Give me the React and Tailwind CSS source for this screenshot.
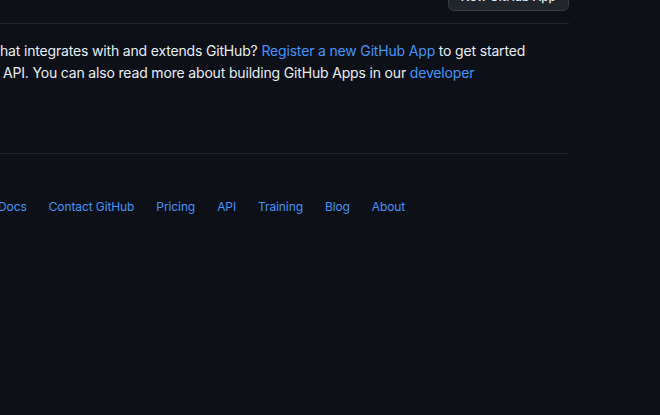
import React from 'react';

// Footer links shown along the bottom of the settings page
const footerLinks = ['Docs', 'Contact GitHub', 'Pricing', 'API', 'Training', 'Blog', 'About'];

function App() {
  return (
    <div className="h-[415px] w-[660px] overflow-hidden bg-[#0d1117] font-['Inter',sans-serif] text-[#e6edf3]">
      <div className="-mt-[17px] w-[569px]">
        {/* Header with the new app button */}
        <div className="flex justify-end border-b border-[#21262d] pb-[12px]">
          <button className="h-7 rounded-md border border-[#363b42] bg-[#21262d] px-3 text-xs font-medium leading-[26px] text-[#e6edf3]">
            New GitHub App
          </button>
        </div>

        {/* Blankslate text */}
        <div className="mt-4 text-sm leading-[21.5px] tracking-[-0.17px]">
          <p className="whitespace-nowrap">
            hat integrates with and extends GitHub?{' '}
            <a href="#" className="text-[#4493f8]">Register a new GitHub App</a> to get started
          </p>
          <p className="whitespace-nowrap pl-[3px]">
            API. You can also read more about building GitHub Apps in our{' '}
            <a href="#" className="text-[#4493f8]">developer</a>
          </p>
        </div>

        <div className="mt-[70px] border-t border-[#21262d]"></div>
      </div>

      {/* Footer */}
      <ul className="mt-[44px] -ml-[2px] flex gap-[22px] text-xs leading-[18px] tracking-[-0.1px]">
        {footerLinks.map((link) => (
          <li key={link}>
            <a href="#" className="text-[#4493f8]">{link}</a>
          </li>
        ))}
      </ul>
    </div>
  );
}

export default App;
